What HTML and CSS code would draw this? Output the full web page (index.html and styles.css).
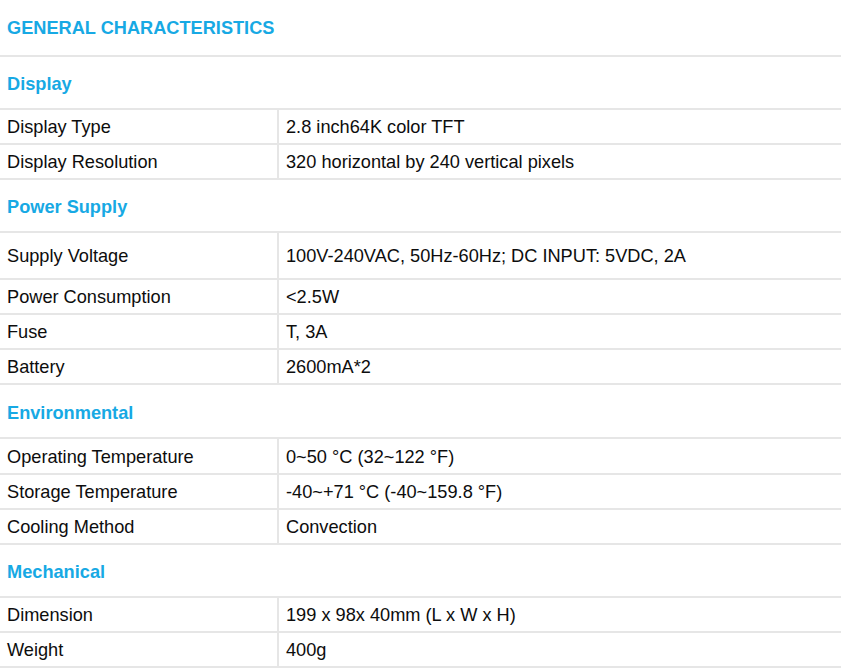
FILE: index.html
```html
<!DOCTYPE html>
<html>
<head>
<meta charset="utf-8">
<link rel="stylesheet" href="styles.css">
</head>
<body>
<div class="sheet">
  <div class="title">GENERAL CHARACTERISTICS</div>

  <div class="section">Display</div>
  <div class="row"><div class="key">Display Type</div><div class="val">2.8 inch64K color TFT</div></div>
  <div class="row"><div class="key">Display Resolution</div><div class="val">320 horizontal by 240 vertical pixels</div></div>

  <div class="section">Power Supply</div>
  <div class="row tall"><div class="key">Supply Voltage</div><div class="val">100V-240VAC, 50Hz-60Hz; DC INPUT: 5VDC, 2A</div></div>
  <div class="row"><div class="key">Power Consumption</div><div class="val">&lt;2.5W</div></div>
  <div class="row"><div class="key">Fuse</div><div class="val">T, 3A</div></div>
  <div class="row"><div class="key">Battery</div><div class="val">2600mA*2</div></div>

  <div class="section env">Environmental</div>
  <div class="row r36"><div class="key">Operating Temperature</div><div class="val">0~50 °C (32~122 °F)</div></div>
  <div class="row"><div class="key">Storage Temperature</div><div class="val">-40~+71 °C (-40~159.8 °F)</div></div>
  <div class="row"><div class="key">Cooling Method</div><div class="val">Convection</div></div>

  <div class="section">Mechanical</div>
  <div class="row"><div class="key">Dimension</div><div class="val">199 x 98x 40mm (L x W x H)</div></div>
  <div class="row"><div class="key">Weight</div><div class="val">400g</div></div>
</div>
</body>
</html>
```

FILE: styles.css
```css
html, body {
  margin: 0;
  padding: 0;
  background: #ffffff;
}
.sheet {
  width: 841px;
  font-family: "Liberation Sans", Arial, sans-serif;
  font-size: 18.2px;
  color: #0d0d0d;
}
.title, .section {
  display: flex;
  align-items: center;
  padding-left: 7px;
  color: #17a9e4;
  font-weight: bold;
  border-bottom: 2px solid #e6e6e6;
  box-sizing: border-box;
}
.title {
  height: 57px;
  padding-top: 2px;
}
.section {
  height: 53px;
  padding-top: 4px;
}
.section.env {
  height: 54px;
}
.row {
  display: grid;
  grid-template-columns: 277px 1fr;
  height: 35px;
  border-bottom: 2px solid #e6e6e6;
  box-sizing: border-box;
}
.row.tall {
  height: 47px;
}
.row.r36 {
  height: 36px;
}
.key, .val {
  display: flex;
  align-items: center;
  padding-top: 2px;
}
.key {
  padding-left: 7px;
}
.val {
  padding-left: 7px;
  border-left: 2px solid #e6e6e6;
}
```
